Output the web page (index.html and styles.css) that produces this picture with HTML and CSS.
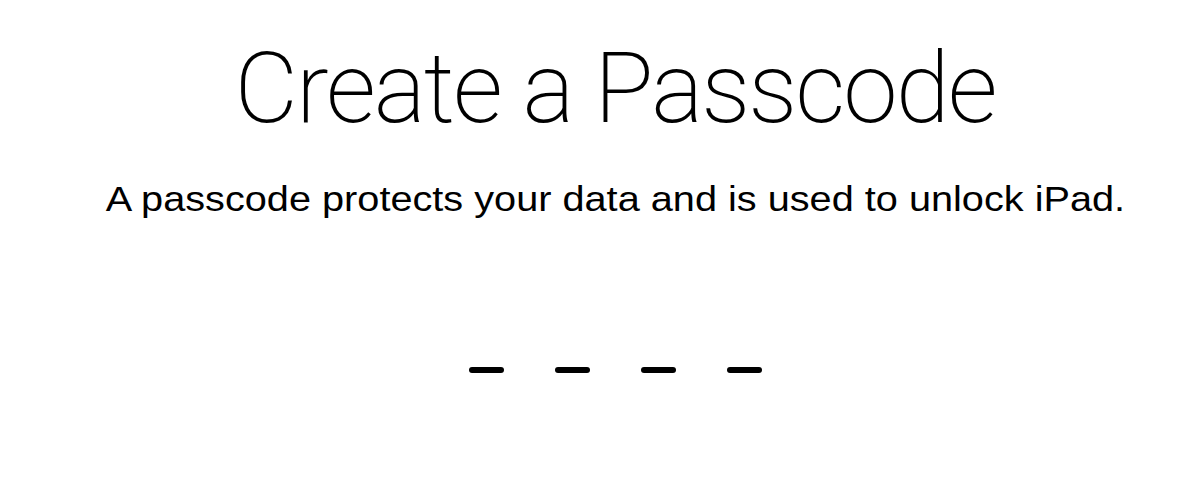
FILE: index.html
```html
<!DOCTYPE html>
<html lang="en">
<head>
    <meta charset="UTF-8">
    <meta name="viewport" content="width=device-width, initial-scale=1.0">
    <title>Create a Passcode</title>
    <link rel="stylesheet" href="styles.css">
</head>
<body>

<!-- Passcode setup screen -->
<div class="screen">
    <h1 class="title">Create a Passcode</h1>
    <p class="subtitle">A passcode protects your data and is used to unlock iPad.</p>

    <!-- Four empty digit slots -->
    <div class="slots">
        <span class="slot"></span>
        <span class="slot"></span>
        <span class="slot"></span>
        <span class="slot"></span>
    </div>
</div>

</body>
</html>
```
FILE: styles.css
```css
body {
    margin: 0;
    padding: 0;
    background-color: #fff;
    color: #000;
    font-family: 'Liberation Sans', Arial, sans-serif;
}

/* Full screen column, shifted a little to the right like the device shot */
.screen {
    display: flex;
    flex-direction: column;
    align-items: center;
    height: 492px;
    padding-left: 30px;
    box-sizing: border-box;
}

.title {
    font-family: 'Roboto', sans-serif;
    font-weight: 200;
    font-size: 98px;
    line-height: 1;
    letter-spacing: -2px;
    margin: 40px 0 0 0;
    white-space: nowrap;
}

/* The device shot is stretched sideways a little */
.subtitle {
    font-size: 35px;
    line-height: 1;
    margin: 43px 0 0 0;
    white-space: nowrap;
    transform: scaleX(1.134);
}

/* Digit placeholders */
.slots {
    display: flex;
    gap: 51px;
    margin-top: 151px;
}

.slot {
    display: block;
    width: 35px;
    height: 6px;
    border-radius: 3px;
    background-color: #000;
}
```
